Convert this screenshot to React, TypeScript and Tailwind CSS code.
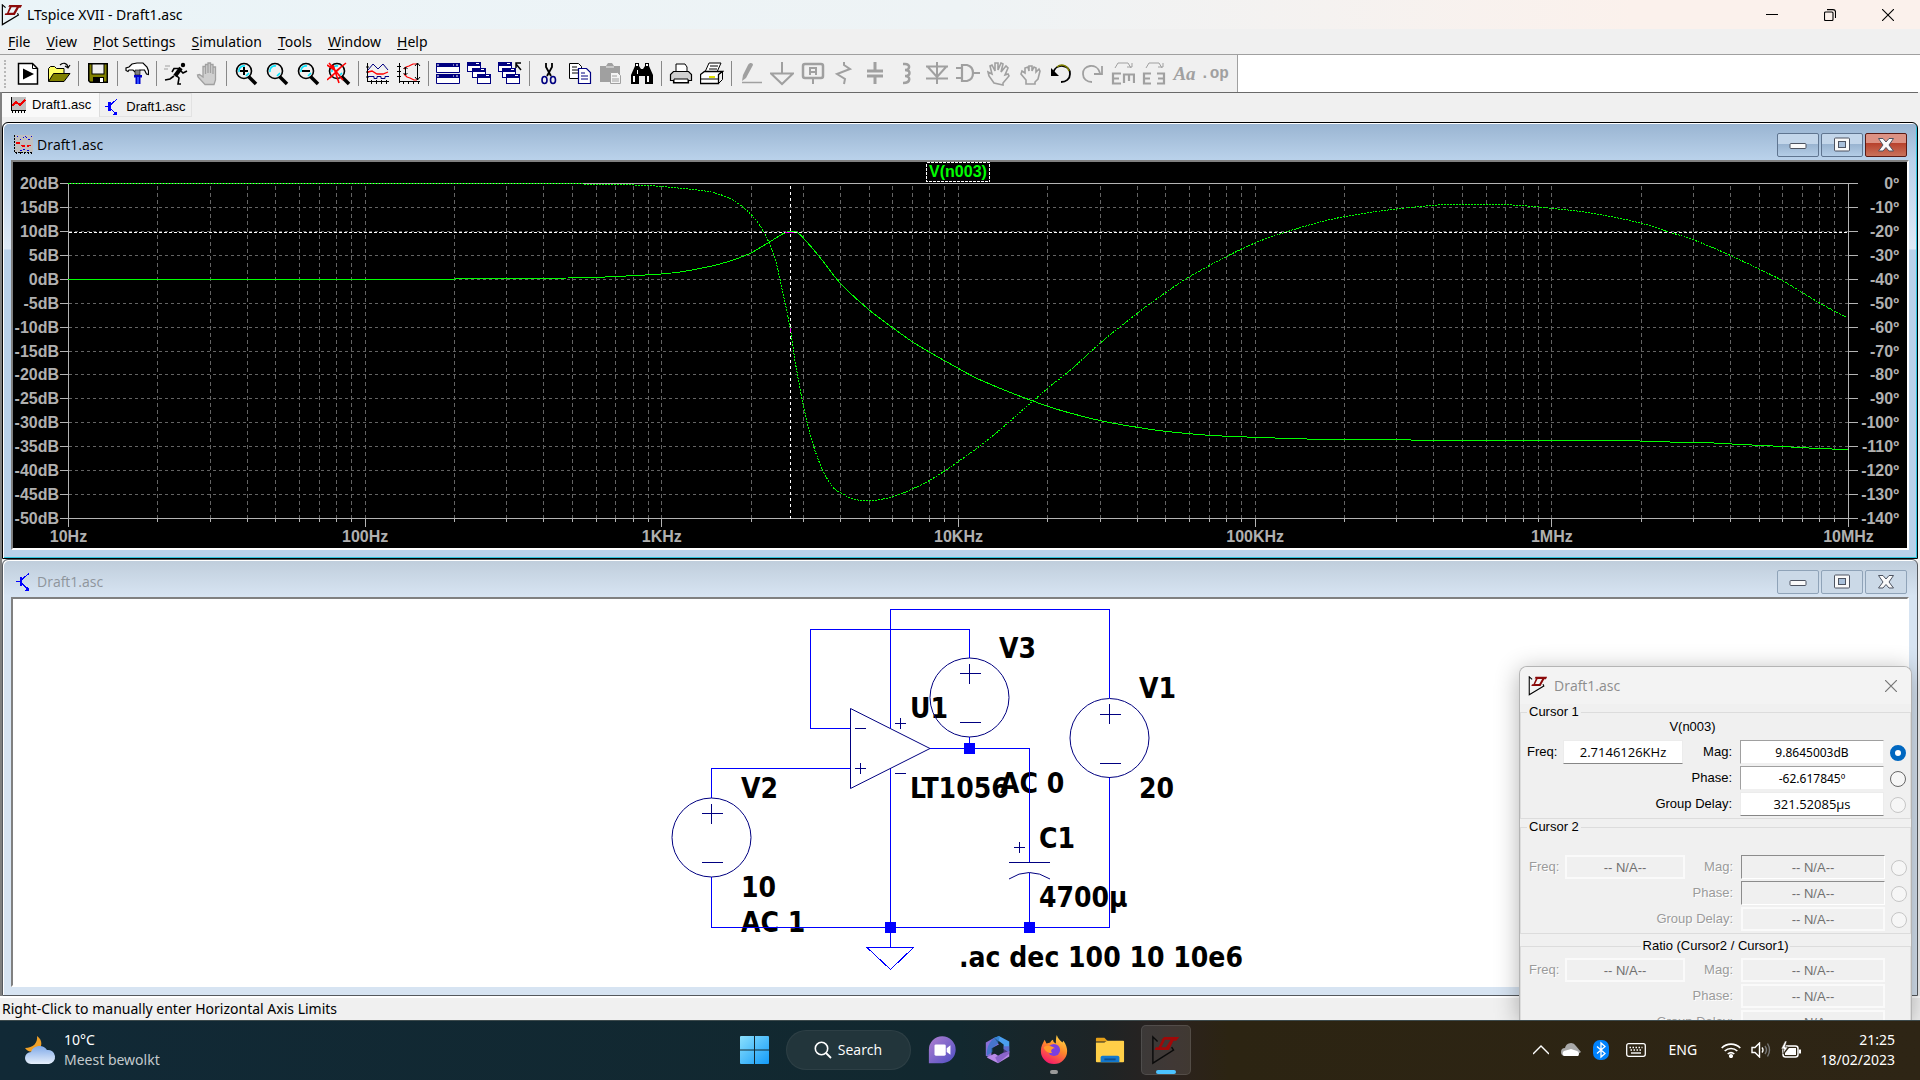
import React from "react";

type Pt = [number, number];

const UI = "font-['Noto_Sans','Open_Sans',sans-serif]";
const SANS = "font-['Liberation_Sans',Arial,sans-serif]";

/* ---------- Logo and small pictures ---------- */

function Logo({ className }: { className: string }) {
  return (
    <svg viewBox="0 0 24 24" className={className} aria-hidden="true">
      <path d="M5 4 1.5 1v21.500L19 12l-1-2" fill="none" stroke="#000" strokeWidth="1.300" />
      <path
        d="M9 1h14l-1.500 3h-2l-4.500 8H4l.8-2h1.700l3-7H8zM11.500 3.500l-3 6h5l3.500-6z"
        fill="#8b0a0a"
        fillRule="evenodd"
      />
    </svg>
  );
}

function PlotIcon({ className }: { className: string }) {
  return (
    <svg viewBox="0 0 20 20" className={className} aria-hidden="true" shapeRendering="crispEdges">
      <rect x="2" width="18" height="17" fill="#c0c0c0" />
      <path d="M1.500 0v17M2 17h18M3.500 17v3M7.500 17v3M11.500 17v3M15.500 17v3M18.500 17v3" stroke="#000" strokeDasharray="2 1" fill="none" />
      <path d="M4 1l4 4 4-4 4 4 3-4M7 16l3-2 4 2 3-2" stroke="#0000e0" strokeDasharray="2 2" fill="none" />
      <path d="M3 8h3l4 3h5l4-1" stroke="#e00" strokeWidth="1.500" strokeDasharray="4 2" fill="none" />
    </svg>
  );
}

function PlotTabIcon() {
  return (
    <svg viewBox="0 0 16 16" className="size-4" aria-hidden="true" shapeRendering="crispEdges">
      <rect x="2" width="14" height="13" fill="#c0c0c0" />
      <path d="M1 0v13.500h15M2.500 14v2M5.500 14v2M8.500 14v2M11.500 14v2M14.500 14v2" stroke="#000" fill="none" />
      <path d="M2 9l4-4 4 3 5-5" stroke="#f00000" strokeWidth="2" fill="none" />
    </svg>
  );
}

function TransistorIcon({ className }: { className: string }) {
  return (
    <svg viewBox="0 0 16 20" className={className} aria-hidden="true" shapeRendering="crispEdges">
      <path d="M0 9.500h6M7 7l8-7M7 12l7 7" stroke="#00f" fill="none" strokeWidth="1.400" />
      <path d="M4 4h3v11H4zM15 20h-5l4-5z" fill="#00f" />
    </svg>
  );
}

/* ---------- Toolbar ---------- */

const Lens = ({ children }: { children?: React.ReactNode }) => (
  <>
    <path d="M14 14l8 8" stroke="#000" strokeWidth="3.500" />
    <circle cx="10" cy="9" r="7.500" fill="#f0f0f0" stroke="#000" strokeWidth="1.600" />
    <path d="M5 10a5 5 0 0 1 6-6M12 14l3-3" stroke="#00e5ff" strokeWidth="1.600" />
    {children}
  </>
);

const Win = ({ x, y }: { x: number; y: number }) => (
  <>
    <rect x={x + 0.5} y={y + 0.5} width="13" height="9" fill="#fff" stroke="#000080" />
    <rect x={x} y={y} width="14" height="4" fill="#000080" />
    <rect x={x + 9} y={y + 1} width="3" height="1" fill="#fff" />
  </>
);

const G = "#a0a0a0";

type Tool = { name: string; art: React.ReactNode; sepAfter?: boolean };

const tools: Tool[] = [
  {
    name: "New",
    art: (
      <>
        <path d="M2.500 1.500h14l5 5v15.500h-19z" fill="#fff" stroke="#000" strokeWidth="1.500" />
        <path d="M16.500 1.500v5h5" stroke="#000" />
        <path d="M7 6.500v11l11-5.500z" fill="#000" />
      </>
    ),
  },
  {
    name: "Open",
    sepAfter: true,
    art: (
      <>
        <path d="M1.500 19V6.500l2-2h4l2 2h7.500V12" fill="#ffff66" stroke="#000" />
        <path d="M1.500 19.500l5-8h16.500l-6 8z" fill="#808000" stroke="#000" />
        <path d="M13 3c3-3 7-2 8 2m-3-1l3 2 2-3" stroke="#000" strokeWidth="1.200" />
      </>
    ),
  },
  {
    name: "Save",
    sepAfter: true,
    art: (
      <>
        <path d="M2 1h20v20H4l-2-2z" fill="#000" />
        <path d="M3.500 2.500h17v17h-16l-1-1z" fill="#808000" />
        <rect x="6" y="2" width="12" height="10" fill="#f0f0f0" stroke="#000" />
        <rect x="7" y="15" width="11" height="6" fill="#000" />
        <rect x="14" y="16" width="3" height="4" fill="#fff" />
      </>
    ),
  },
  {
    name: "Control Panel",
    sepAfter: true,
    art: (
      <>
        <path
          d="M1 8.500V6l3-1 3-3 5-1h6l4 4 1.500 4v3.500l-2-.5-2-4H15l-1 2h-4l-2-2H4l-1 1.500z"
          fill="#fff"
          stroke="#000"
          strokeWidth="1.200"
        />
        <path d="M10 8h5v5h-5z" fill="#808080" stroke="#000" strokeWidth=".6" />
        <path d="M9 13h8v2.500h-1.500V22h-5v-6.500H9z" fill="#0000c8" />
        <path d="M12 15h2v7h-2z" fill="#2a4dff" />
      </>
    ),
  },
  {
    name: "Run",
    art: (
      <>
        <circle cx="19" cy="3" r="2.200" fill="#000" />
        <path d="M1 4h5M0 7h4" stroke="#a0a0a0" />
        <path d="M17 6l-6 8" stroke="#000" strokeWidth="4" />
        <path d="M15 6.500H10L8 10M16 8l3 3 4-2M12 13l3 3-1 6h3M10 14l-4 3-5 1" stroke="#000" strokeWidth="1.600" />
      </>
    ),
  },
  {
    name: "Halt",
    sepAfter: true,
    art: (
      <path
        d="M10 22.500L3 15l-.5-2 2-.5L8 15V4.500h2.500V12 2.500H13V11 1h2.500v10V2.500H18V12 5h2.500v13L19 22.500z"
        fill="#cfcfcf"
        stroke={G}
        strokeWidth="1.300"
      />
    ),
  },
  { name: "Zoom in", art: <Lens><path d="M6 9h8M10 5v8" stroke="#000" strokeWidth="2" /></Lens> },
  { name: "Pan", art: <Lens /> },
  { name: "Zoom out", art: <Lens><path d="M6 9h8" stroke="#000" strokeWidth="2" /></Lens> },
  {
    name: "Zoom full extents",
    sepAfter: true,
    art: (
      <Lens>
        <path d="M0 3l9 6 10-8M2 1l14 17M0 18l8-7M3 16L15 4M6 3l4 12 2 6" stroke="#f00" strokeWidth="1.600" />
      </Lens>
    ),
  },
  {
    name: "Autorange",
    art: (
      <>
        <path d="M1.500 1v19M1 19.500h22M0 5h3M0 10h3M0 15h3M5.500 18v4M10.500 18v4M15.500 18v4M20.500 18v4" stroke="#000" />
        <path d="M2 8l5-6 5 5 5-5 5 6" stroke="#000080" />
        <path d="M2 10l4-1 5 3h6l5-2" stroke="#f00" strokeWidth="1.300" />
        <path d="M2 14.500h6v2h3v-2h4v2h4v-2h4" stroke="#000080" />
      </>
    ),
  },
  {
    name: "Manual limits",
    sepAfter: true,
    art: (
      <>
        <path d="M2.500 1v20M2 19.500h21M0 4.500h4M0 9.500h4M0 14.500h4M6.500 19v3M11.500 19v3M16.500 19v3M21.500 19v3" stroke="#000" />
        <path d="M7 7l2-2 3-1 4-2h4M7 12l3 3 3 1 4 2h3" stroke="#f00" strokeWidth="1.200" />
        <path d="M8.500 5v8M6.500 7l2-2 2 2M6.500 11l2 2 2-2M20.500 1v17M18 4l2.500-3L23 4M18 15l2.500 3 2.500-3" stroke="#000" />
      </>
    ),
  },
  {
    name: "Tile",
    art: (
      <>
        <path d="M.5 1.500h23v9H.500zM.5 12.500h23v9H.500z" fill="#fff" stroke="#000080" />
        <path d="M0 1h24v4H0zM0 12h24v4H0z" fill="#000080" />
        <path d="M1 3h2M17 3h1m2 0h2M1 14h2M17 14h1m2 0h2" stroke="#fff" />
      </>
    ),
  },
  { name: "Cascade", art: <><Win x={0} y={0} /><Win x={5} y={6} /><Win x={10} y={12} /></> },
  {
    name: "Close all",
    sepAfter: true,
    art: (
      <>
        <Win x={0} y={0} /><Win x={4} y={6} /><Win x={8} y={12} />
        <path d="M23 8l-5-6m0 4V1h5" stroke="#000" strokeWidth="1.500" />
      </>
    ),
  },
  {
    name: "Cut",
    art: (
      <>
        <path d="M9 1v4l5 9M15 1v4l-5 9" stroke="#000" strokeWidth="1.800" />
        <ellipse cx="7.500" cy="18" rx="2.500" ry="3.500" stroke="#000080" strokeWidth="1.600" />
        <ellipse cx="16" cy="18" rx="2.500" ry="3.500" stroke="#000080" strokeWidth="1.600" />
      </>
    ),
  },
  {
    name: "Copy",
    art: (
      <>
        <path d="M1.500 1.500h9l3 3v12h-12z" fill="#fff" stroke="#000" />
        <path d="M4 5h5M4 8h6M4 11h6" stroke="#000" />
        <path d="M10.500 6.500h8l4 4v11h-12z" fill="#fff" stroke="#000080" strokeWidth="1.200" />
        <path d="M13 11h4M13 14h7M13 17h7" stroke="#000080" />
      </>
    ),
  },
  {
    name: "Paste",
    art: (
      <>
        <path d="M1 4h6l2-3h4l2 3h6v16H1z" fill={G} />
        <path d="M7 5h8" stroke="#f0f0f0" />
        <path d="M11.500 10.500h7l3 3v8h-10z" fill="#f4f4f4" stroke={G} />
        <path d="M13 14h5M13 17h7M13 19h7" stroke={G} />
      </>
    ),
  },
  {
    name: "Find",
    sepAfter: true,
    art: (
      <>
        <path d="M5 1h4v3l2 3h2l2-3V1h4v3l4 9v9h-8v-8H9v8H1v-9l4-9z" fill="#000" />
        <path d="M6 2h2v2H6zM16 2h2v2h-2zM3 14h2v6H3zM17 14h2v6h-2zM7 8h1v4H7z" fill="#fff" />
      </>
    ),
  },
  {
    name: "Print setup",
    art: (
      <>
        <path d="M7 10V2h9l2 3v5" fill="#fff" stroke="#000" />
        <path d="M4.500 9.500h15l3 3v6h-3v2.500h-15v-2.500h-3v-6z" fill="#d0d0d0" stroke="#000" strokeWidth="1.200" />
        <path d="M5 17h14v3.500H5z" fill="#fff" stroke="#000" />
      </>
    ),
  },
  {
    name: "Print",
    sepAfter: true,
    art: (
      <>
        <path d="M5 10L9 1h12l-4 9" fill="#fff" stroke="#000" />
        <path d="M10 4h8M9 7h8" stroke="#000" />
        <path d="M.5 12.500l4-3h18l-4 3v9H.500z" fill="#fff" stroke="#000" strokeWidth="1.300" />
        <path d="M18.500 12.500l4-3v8l-4 4M1 17h17" stroke="#000" />
        <path d="M9 15h6" stroke="#e0e000" strokeWidth="2" />
      </>
    ),
  },
  {
    name: "Wire",
    art: (
      <>
        <path d="M9 3c2-3 5-2 5 0L7 16l-4 3 1-6z" fill={G} />
        <path d="M3 20.500h20" stroke={G} strokeWidth="1.500" />
      </>
    ),
  },
  { name: "Ground", art: <path d="M12 0v12M1 11.500h22L12 22z" stroke={G} strokeWidth="2" /> },
  {
    name: "Label net",
    art: (
      <>
        <rect x="2" y="2" width="20" height="14" rx="2" stroke={G} strokeWidth="2.500" />
        <path d="M12 16v6M9 13V6h6v7M9 10h6" stroke={G} strokeWidth="2" />
      </>
    ),
  },
  { name: "Resistor", art: <path d="M12 0v3l6 4-13 5 8 5-1 5" stroke={G} strokeWidth="2" /> },
  { name: "Capacitor", art: <path d="M12 0v8M12 15v7M4 9h16M4 14h16" stroke={G} strokeWidth="3" /> },
  { name: "Inductor", art: <path d="M9 2h2c6 0 5 6 0 6 6 0 6 6 0 6 6 0 6 7-2 7" stroke={G} strokeWidth="2.500" /> },
  { name: "Diode", art: <path d="M12 0v22M1 4.500h22M3 5l9 10 9-10M1 16.500h22" stroke={G} strokeWidth="2" /> },
  { name: "Component", art: <path d="M0 6h6M0 16h6M17 11h7M6 3v16h5c8-2 8-14 0-16z" stroke={G} strokeWidth="2.200" /> },
  {
    name: "Move",
    art: (
      <path
        d="M7 21l-5-7-1-4 4 2-2-8 2-1 3 6V1h3v7l3-7 2 1-2 8 5-6 2 2-3 7 3-1 1 2-6 7v2z"
        stroke={G}
        strokeWidth="1.600"
      />
    ),
  },
  {
    name: "Drag",
    art: (
      <path
        d="M8 22v-4l-5-6 1-3 3 2V6l3-1 1 4V4h3v5l2-4 2 1v4l3-3 1 2-2 8-3 3v2z"
        stroke={G}
        strokeWidth="1.600"
      />
    ),
  },
  {
    name: "Undo",
    art: (
      <>
        <path d="M4 11C7 0 22 3 21 12c0 5-4 8-9 8" stroke="#000" strokeWidth="1.800" />
        <path d="M8 5c5-4 11-1 12 4" stroke="#808000" strokeWidth="1.500" />
        <path d="M2 6v8h8z" fill="#000" />
      </>
    ),
  },
  {
    name: "Redo",
    art: <path d="M20 11C17 0 2 3 3 12c0 5 4 8 9 8M22 4v8h-8" stroke={G} strokeWidth="1.800" />,
  },
  {
    name: "Mirror",
    art: (
      <>
        <path d="M10 11.500H2v10h8M2 16.500h6M13 21v-8.500h10V21M18 13v6" stroke={G} strokeWidth="2.200" />
        <path d="M4 6l3-5h10l3 5m-4-1h5V1" stroke={G} />
      </>
    ),
  },
  {
    name: "Rotate",
    art: (
      <>
        <path d="M9 11.500H2v10h7M2 16.500h6M15 11.500h7v10h-7M22 16.500h-6" stroke={G} strokeWidth="2.200" />
        <path d="M4 6l3-5h10l3 5m-4-1h5V1" stroke={G} />
      </>
    ),
  },
];

function Toolbar() {
  return (
    <div className="flex h-[38px] border-t border-[#a0a0a0] bg-white">
      <div className="flex items-center border-r border-[#a0a0a0] bg-[#f0f0f0] pr-2 pl-1">
        <div className="mr-[6px] h-7 w-[2px] border-l-2 border-dotted border-[#b8b8b8]" />
        {tools.map((t) => (
          <React.Fragment key={t.name}>
            <button type="button" aria-label={t.name} className="flex h-8 w-[31px] shrink-0 items-center justify-center">
              <svg viewBox="0 0 24 24" className="h-6 w-6" fill="none">
                {t.art}
              </svg>
            </button>
            {t.sepAfter && (
              <div className="flex w-2 justify-center">
                <div className="h-[25px] w-px bg-[#888]" />
              </div>
            )}
          </React.Fragment>
        ))}
        <button type="button" className="h-8 w-[31px] font-['Liberation_Serif',serif] text-[19px] leading-8 font-bold text-[#a0a0a0] italic">
          Aa
        </button>
        <button type="button" className="h-8 w-[29px] font-['Liberation_Mono',monospace] text-[16px] leading-7 font-bold text-[#a0a0a0]">
          .op
        </button>
      </div>
    </div>
  );
}

/* ---------- Waveform plot ---------- */

const LEFT = 68.5;
const RIGHT = 1848.5;
const TOP = 183.5;
const BOTTOM = 518.5;
const DECADE = (RIGHT - LEFT) / 6;

const magnitude: Pt[] = [
  [68, 279.5], [455, 279], [568, 278], [605, 277], [645, 275], [661, 274], [680, 272], [700, 268.5], [720, 264],
  [739.5, 257.7], [751.4, 252.7], [769, 242.3], [785, 232.7], [791, 231.3], [797, 232.3], [803.6, 238.3],
  [818.6, 255.7], [840.4, 283.3], [869.2, 310], [892.6, 327.7], [912.3, 341.7], [929.7, 352.3], [958.2, 368.3],
  [976.8, 378.3], [1008.4, 391.7], [1032.9, 401], [1055.9, 409], [1100.6, 420.7], [1137.3, 427.3], [1165.4, 431.3],
  [1209.3, 435.3], [1255.6, 437.3], [1320, 439.3], [1410.8, 440], [1624.6, 440.7], [1680, 442.3], [1713.7, 443],
  [1737.5, 444.3], [1773, 446], [1808.7, 448], [1848, 449.7],
];

const phase: Pt[] = [
  [68, 183.5], [540, 183.5], [583, 184], [635, 185], [660, 186.4], [700, 190.3], [713.8, 192.7], [729.7, 198.3],
  [741.5, 206], [751.4, 215], [763.3, 231], [775, 259], [783, 293.3], [790.2, 328.3], [794.9, 360], [803.6, 406.7],
  [812.7, 443.3], [822.6, 470], [832.5, 486.7], [840.4, 492.7], [854.2, 499.3], [869.2, 500.3], [881.9, 499.3],
  [897.7, 495], [912.3, 489], [929.7, 480.3], [958.2, 461.7], [992.6, 436], [1032.9, 401], [1047.6, 388.3],
  [1071.7, 369], [1100.6, 342.7], [1137.3, 313.3], [1165.4, 292.7], [1189.5, 276.7], [1226.3, 256.7], [1255.6, 242.7],
  [1285.2, 232.3], [1320, 222], [1344.3, 216.7], [1375.2, 211.7], [1396.6, 209], [1433.4, 205.3], [1462.7, 204.3],
  [1494, 204.3], [1523.7, 205.7], [1551.8, 208.3], [1593, 213.3], [1641.7, 223.3], [1670, 232.3], [1693.9, 240],
  [1731, 255.7], [1759.6, 269.3], [1783, 281], [1820, 303.3], [1846.3, 317.3],
];

function smooth(points: Pt[]): string {
  let d = `M${points[0][0]} ${points[0][1]}`;
  for (let i = 0; i < points.length - 1; i++) {
    const p1 = points[i];
    const p2 = points[i + 1];
    const p0 = points[i - 1] ?? p1;
    const p3 = points[i + 2] ?? p2;
    const third = (p2[0] - p1[0]) / 3;
    const s1 = (p2[1] - p0[1]) / (p2[0] - p0[0] || 1);
    const s2 = (p3[1] - p1[1]) / (p3[0] - p1[0] || 1);
    d += `C${p1[0] + third} ${p1[1] + s1 * third} ${p2[0] - third} ${p2[1] - s2 * third} ${p2[0]} ${p2[1]}`;
  }
  return d;
}

const rows = Array.from({ length: 15 }, (_, i) => ({
  y: Math.round(TOP + ((BOTTOM - TOP) * i) / 14 - 0.5) + 0.5,
  db: `${20 - 5 * i}dB`,
  deg: i === 0 ? "0º" : `-${10 * i}º`,
}));

const freqs = ["10Hz", "100Hz", "1KHz", "10KHz", "100KHz", "1MHz", "10MHz"];

const minor = Array.from({ length: 6 }, (_, d) => d).flatMap((d) =>
  [1, 2, 3, 4, 5, 6, 7, 8, 9].map((m) => ({ m, x: Math.round(LEFT + DECADE * (d + Math.log10(m)) - 0.5) + 0.5 })),
);

function Plot() {
  return (
    <svg viewBox="13 162 1894 386" className="block h-auto w-full bg-black" role="img" aria-label="V(n003) frequency response">
      <g shapeRendering="crispEdges" fill="none">
        <g stroke="#646464" strokeDasharray="3 3">
          {rows.slice(1, 14).map((r) => (
            <line key={r.y} x1={LEFT} x2={RIGHT} y1={r.y} y2={r.y} />
          ))}
          {minor.slice(1).map((v) => (
            <line key={v.x} x1={v.x} x2={v.x} y1={TOP + 2} y2={BOTTOM} strokeDasharray="4 3" />
          ))}
        </g>
        <rect x={LEFT} y={TOP} width={RIGHT - LEFT} height={BOTTOM - TOP} stroke="#b4b4b4" />
        <g stroke="#b4b4b4">
          {rows.map((r) => (
            <path key={r.y} d={`M60 ${r.y}h8M1849 ${r.y}h9`} />
          ))}
          {minor.map((v) => (
            <line key={v.x} x1={v.x} x2={v.x} y1={BOTTOM} y2={BOTTOM + (v.m === 1 ? 8 : 3)} />
          ))}
          <line x1={RIGHT} x2={RIGHT} y1={BOTTOM} y2={BOTTOM + 8} />
        </g>
        <path d={smooth(phase)} stroke="#00ff00" strokeDasharray="2 1" />
        <path d={smooth(magnitude)} stroke="#00ff00" />
        <path d={`M${LEFT} 232.500H${RIGHT}`} stroke="#fff" strokeDasharray="3 2" />
        <path d={`M790.500 ${TOP + 2}V${BOTTOM}`} stroke="#fff" strokeDasharray="3 3" />
        <path d="M785 232.500h9M790.500 328v4" stroke="#ff00ff" />
        <rect x="926.500" y="162.500" width="63" height="19" stroke="#fff" strokeDasharray="3 1" />
      </g>
      <g className={`${SANS} text-[16px] font-bold`} fill="#b0b0b0">
        {rows.map((r) => (
          <React.Fragment key={r.y}>
            <text x="59" y={r.y + 5} textAnchor="end">{r.db}</text>
            <text x="1899" y={r.y + 5} textAnchor="end">{r.deg}</text>
          </React.Fragment>
        ))}
        {freqs.map((f, i) => (
          <text key={f} x={LEFT + DECADE * i} y="542" textAnchor="middle">{f}</text>
        ))}
        <text x="958" y="177" textAnchor="middle" fill="#00ff00">V(n003)</text>
      </g>
    </svg>
  );
}

/* ---------- Schematic ---------- */

function Source({ x, y }: { x: number; y: number }) {
  return (
    <>
      <circle cx={x} cy={y} r="39.500" />
      <path d={`M${x - 10} ${y - 24}h21M${x} ${y - 34}v20M${x - 10} ${y + 25}h21`} shapeRendering="crispEdges" />
    </>
  );
}

const labels: [number, number, string][] = [
  [999, 658, "V3"], [1139, 698, "V1"], [910, 718, "U1"], [741, 798, "V2"], [910, 798, "LT1056"], [1000, 793, "AC 0"],
  [1139, 798, "20"], [1039, 848, "C1"], [1039, 907, "4700µ"], [741, 897, "10"], [741, 932, "AC 1"],
  [959, 967, ".ac dec 100 10 10e6"],
];

function Schematic() {
  return (
    <svg viewBox="640 599 640 386" className="h-[386px] w-[640px]" role="img" aria-label="Schematic">
      <g fill="#000" className="font-['DejaVu_Sans_Condensed','DejaVu_Sans',sans-serif] text-[28px] font-bold">
        {labels.map(([x, y, t]) => (
          <text key={t} x={x} y={y}>{t}</text>
        ))}
      </g>
      <g fill="none" stroke="#0000ff" shapeRendering="crispEdges">
        <path d="M890.500 728V609.500h219V698M969.500 658v-28.500h-159V728.500H850M930 748.500h99.500V862M969.500 737v11" />
        <path d="M850 768.500H711.500V798M711.500 877v50.500h398V777M890.500 768v179M1029.500 873v54" />
        <path d="M867 947.500h46.500L890.500 969.500z" />
      </g>
      <g fill="none" stroke="#000080">
        <Source x={711.5} y={837.5} />
        <Source x={969.5} y={697.5} />
        <Source x={1109.5} y={738} />
        <path d="M850.500 708.500v80L930 748.500z" />
        <path d="M855 728.500h11M855 768.500h11M860.500 763v11M895 723.500h11M900.500 718v11M895 773.500h11" shapeRendering="crispEdges" />
        <path d="M1009 862.500h41M1014 847.500h11M1019.500 842v11" shapeRendering="crispEdges" />
        <path d="M1009 879q20-13 41 0" />
      </g>
      <path d="M964 743h11v11h-11zM885 922h11v11h-11zM1024 922h11v11h-11z" fill="#0000ff" />
    </svg>
  );
}

/* ---------- Child window frame ---------- */

function CaptionButtons({ active }: { active: boolean }) {
  const base = "flex h-6 w-[42px] items-center justify-center rounded-[2px] border";
  const plain = active
    ? "border-[#5f7590] bg-[linear-gradient(#c3d6ea_0_45%,#98b3d0_45%,#b4cde6)]"
    : "border-[#8fa3b8] bg-[#cbd9e7]";
  const close = active ? "border-[#5a1a14] bg-[linear-gradient(#dd9284_0_40%,#b8412c_42%,#c9735c)]" : plain;
  return (
    <div className="flex gap-[2px]">
      <button type="button" aria-label="Minimize" className={`${base} ${plain}`}>
        <svg viewBox="0 0 18 18" className="size-[18px]"><rect x="1" y="7.500" width="16" height="5" rx="1" fill="#fafafa" stroke="#4d5360" /></svg>
      </button>
      <button type="button" aria-label="Maximize" className={`${base} ${plain}`}>
        <svg viewBox="0 0 18 18" className="size-[18px]">
          <rect x="1.500" y="2" width="15" height="13" rx="1" fill="#fafafa" stroke="#4d5360" />
          <rect x="5.500" y="5.500" width="7" height="6" fill="#a9c0da" stroke="#4d5360" />
        </svg>
      </button>
      <button type="button" aria-label="Close" className={`${base} ${close}`}>
        <svg viewBox="0 0 18 18" className="size-[18px]">
          <path d="M1.500 2.500h4.500l3 3.500 3-3.500h4.500L12 9l4.500 6H12l-3-3.500L6 15H1.500L6 9z" fill="#fafafa" stroke="#4d5360" />
        </svg>
      </button>
    </div>
  );
}

function Child({ active, icon, children }: { active: boolean; icon: React.ReactNode; children: React.ReactNode }) {
  const frame = active
    ? "border-black bg-[linear-gradient(#99b4d1_0,#b9d1ea_36px,#dfeaf6_126px,#b9d1ea_127px)] shadow-[inset_1px_1px_0_#fff,inset_-1px_-1px_0_#2fc4dd]"
    : "border-[#55595e] bg-[linear-gradient(#bfcddb_0,#d7e4f2_36px)] shadow-[inset_1px_1px_0_#fff]";
  return (
    <section className={`rounded-t-[6px] border px-2 pb-2 ${frame}`}>
      <header className="flex h-[37px] items-center justify-between pt-[7px] pr-[2px] pl-[2px]">
        <div className="flex items-center gap-1">
          {icon}
          <h2 className={`font-['Open_Sans',sans-serif] text-[14px] leading-5 ${active ? "text-black" : "text-[#8e959c]"}`}>Draft1.asc</h2>
        </div>
        <CaptionButtons active={active} />
      </header>
      <div className="border-2 border-t-[#808080] border-r-white border-b-white border-l-[#808080] bg-white">{children}</div>
    </section>
  );
}

/* ---------- Cursor dialog ---------- */

type Row = { label: string; value: string; strong?: boolean };

function CursorGroup({
  id,
  title,
  caption,
  freq,
  values,
  enabled,
  radios,
  centered,
}: {
  id: string;
  title: string;
  caption?: string;
  freq: string;
  values: Row[];
  enabled?: boolean;
  radios?: boolean;
  centered?: boolean;
}) {
  const text = enabled ? "pl-[6px] pr-px text-black" : "pl-2 text-[#9b9b9b] [text-shadow:1px_1px_0_#fff]";
  const box = "h-6 w-full text-center";
  const flat = enabled
    ? "border border-[#ececec] border-b-[#868686] bg-white text-black font-['Open_Sans',sans-serif] text-[13px]"
    : "border-2 border-[#fafafa] bg-[#f0f0f0] text-[#707070]";
  const sunk = enabled
    ? "border border-[#a0a0a0] border-r-[#f0f0f0] border-b-[#f0f0f0] bg-white text-black font-['Noto_Sans',sans-serif] text-[12px]"
    : "border border-[#8c8c8c] border-r-white border-b-white bg-[#f0f0f0] text-[#707070]";
  return (
    <fieldset className="border border-[#dcdcdc]">
      <legend className={`px-[2px] leading-4 text-black ${centered ? "mx-auto" : "ml-[6px]"}`}>{title}</legend>
      {caption !== undefined ? (
        <div className="h-5 pr-[46px] text-center leading-[13px]">{caption}</div>
      ) : (
        <div className="h-1" />
      )}
      <div className={`grid grid-cols-[36px_120px_1fr_144px_25px] ${text}`}>
        {values.map((r, i) => (
          <React.Fragment key={r.label}>
            {i === 0 && (
              <>
                <label htmlFor={`${id}-freq`} className="leading-6">Freq:</label>
                <input id={`${id}-freq`} readOnly disabled={!enabled} defaultValue={freq} className={`${box} ${flat}`} />
              </>
            )}
            <label
              htmlFor={`${id}-${i}`}
              className={`h-[26px] pr-2 text-right leading-6 whitespace-nowrap ${i === 0 ? "" : "col-span-3"}`}
            >
              {r.label}
            </label>
            <input
              id={`${id}-${i}`}
              readOnly
              disabled={!enabled}
              defaultValue={r.value}
              className={`${box} ${r.strong ? sunk : flat}`}
            />
            <div className="flex h-[26px] items-center justify-end pr-[3px]">
              {radios && (
                <input
                  type="radio"
                  name={id}
                  aria-label={`${title} ${r.label}`}
                  defaultChecked={enabled && i === 0}
                  disabled={!enabled || i === 2}
                  className="size-4 appearance-none rounded-full border border-[#666] bg-[#f6f6f6] checked:border-[5px] checked:border-[#0067c0] checked:bg-white disabled:border-[#c6c6c6]"
                />
              )}
            </div>
          </React.Fragment>
        ))}
      </div>
    </fieldset>
  );
}

function CursorDialog() {
  const na = "-- N/A--";
  return (
    <div
      role="dialog"
      aria-label="Draft1.asc"
      className={`absolute right-2 bottom-0 h-[354px] w-[393px] overflow-hidden rounded-t-lg border border-b-0 border-[#b4b4b4] bg-[#f0f0f0] shadow-[0_4px_24px_rgba(0,0,0,0.3)] ${SANS} text-[13px] text-black`}
    >
      <div className="flex h-[37px] items-center justify-between bg-[#f3f3f3] pr-[14px] pl-2">
        <div className="flex items-center gap-[6px]">
          <Logo className="size-5" />
          <h2 className="font-['Open_Sans',sans-serif] text-[14px] text-[#8d8d8d]">Draft1.asc</h2>
        </div>
        <button type="button" aria-label="Close">
          <svg viewBox="0 0 12 12" className="size-3"><path d="M0 0l12 12M12 0L0 12" stroke="#777" strokeWidth="1.200" /></svg>
        </button>
      </div>
      <div className="flex flex-col">
        <CursorGroup
          id="c1"
          title="Cursor 1"
          caption="V(n003)"
          freq="2.7146126KHz"
          enabled
          radios
          values={[
            { label: "Mag:", value: "9.8645003dB", strong: true },
            { label: "Phase:", value: "-62.617845º", strong: true },
            { label: "Group Delay:", value: "321.52085µs" },
          ]}
        />
        <CursorGroup
          id="c2"
          title="Cursor 2"
          caption=""
          freq={na}
          radios
          values={[
            { label: "Mag:", value: na, strong: true },
            { label: "Phase:", value: na, strong: true },
            { label: "Group Delay:", value: na },
          ]}
        />
        <div className="pt-1">
          <CursorGroup
            id="ratio"
            title="Ratio (Cursor2 / Cursor1)"
            centered
            freq={na}
            values={[
              { label: "Mag:", value: na },
              { label: "Phase:", value: na },
              { label: "Group Delay:", value: na },
            ]}
          />
        </div>
      </div>
    </div>
  );
}

/* ---------- Taskbar ---------- */

function AppButton({ name, open, current, children }: { name: string; open?: boolean; current?: boolean; children: React.ReactNode }) {
  return (
    <button
      type="button"
      aria-label={name}
      className={`relative flex size-[50px] items-center justify-center rounded-[5px] ${current ? "border border-white/10 bg-white/10" : ""}`}
    >
      <svg viewBox="0 0 32 32" className="size-[30px]">{children}</svg>
      {open && <span className="absolute bottom-px h-1 w-2 rounded-full bg-[#9a9a9a]" />}
      {current && <span className="absolute bottom-0 h-1 w-5 rounded-full bg-[#4cc2ff]" />}
    </button>
  );
}

function Taskbar() {
  return (
    <footer
      className={`grid h-[60px] grid-cols-[1fr_auto_1fr] items-center border-t border-[#3d4a4c] bg-[linear-gradient(90deg,#112936_0%,#12282f_50%,#1d2426_57%,#2b221f_61%,#2c2412_64%,#2e2515_100%)] pb-[2px] ${UI} text-[14px] text-white`}
    >
      <div className="flex items-center gap-2 pl-6">
        <svg viewBox="0 0 32 32" className="size-8">
          <defs>
            <linearGradient id="cloud" x1="0" y1="0" x2="0" y2="1"><stop offset="0" stopColor="#7fa9e8" /><stop offset="1" stopColor="#e6effb" /></linearGradient>
          </defs>
          <path d="M13 2c6 4 6 12-1 15-5 2-9 0-11-3 8 0 13-5 12-12z" fill="#f0a128" />
          <path d="M7 30a6 6 0 0 1 0-12 9 9 0 0 1 16-2 7 7 0 0 1 2 14z" fill="url(#cloud)" />
        </svg>
        <div className="leading-5">
          <div>10°C</div>
          <div className="text-[#c3cacd]">Meest bewolkt</div>
        </div>
      </div>

      <div className="flex items-center gap-[6px]">
        <button type="button" aria-label="Start" className="flex size-[50px] items-center justify-center">
          <svg viewBox="0 0 30 30" className="size-[30px]">
            <defs>
              <linearGradient id="win" x1="0" y1="0" x2="1" y2="1"><stop offset="0" stopColor="#8be0fd" /><stop offset="1" stopColor="#139bf8" /></linearGradient>
            </defs>
            <path d="M0 2a1 1 0 0 1 1-1h13v13.500H0zM15 1h13a1 1 0 0 1 1 1v12.500H15zM0 15.500h14V29H1a1 1 0 0 1-1-1zM15 15.500h14V28a1 1 0 0 1-1 1H15z" fill="url(#win)" />
          </svg>
        </button>
        <button type="button" className="flex h-10 w-[125px] items-center justify-center gap-[6px] rounded-full border border-white/5 bg-[#22353b] font-['Open_Sans',sans-serif]">
          <svg viewBox="0 0 18 18" className="size-[18px]"><circle cx="7.500" cy="7.500" r="6.200" fill="none" stroke="#fff" strokeWidth="1.600" /><path d="M12 12l5 5" stroke="#fff" strokeWidth="1.800" /></svg>
          Search
        </button>
        <AppButton name="Chat">
          <defs>
            <linearGradient id="chat" x1="0" y1="0" x2="1" y2="1"><stop offset="0" stopColor="#b07fd0" /><stop offset="1" stopColor="#4f4fc4" /></linearGradient>
          </defs>
          <path d="M2 30V16A14.300 14.300 0 1 1 16 30z" fill="url(#chat)" />
          <rect x="8" y="10" width="12" height="12" rx="1.500" fill="#fff" />
          <path d="M21 14l4-3v10l-4-3z" fill="#fff" />
        </AppButton>
        <AppButton name="Microsoft 365">
          <path d="M12 3l5-2 11 6v12l-6-4V10z" fill="#4a9ff0" />
          <path d="M12 3L3 8v14l6 3V14l8-4z" fill="#8a6fd8" />
          <path d="M12 3l6-2-2 8-6 5v4l-6 4c0-8 2-14 8-19z" fill="#2b78c8" opacity=".7" />
          <path d="M28 17v6l-12 7-12-6 8-4 4 1z" fill="#b98ae8" />
          <path d="M28 12v8l-12 10-3-6 9-6v-6z" fill="#6c4bb5" opacity=".6" />
          <path d="M16 11l5 3v5l-5 3-4-3v-5z" fill="#14262c" />
        </AppButton>
        <AppButton name="Firefox" open>
          <defs>
            <linearGradient id="fox" x1=".8" y1="0" x2=".3" y2="1"><stop offset="0" stopColor="#ffe14a" /><stop offset=".45" stopColor="#ff8a2a" /><stop offset="1" stopColor="#f5156c" /></linearGradient>
          </defs>
          <path d="M19 0c1 4 3 5 6 8l1-2c3 4 4 8 4 11a14 14 0 0 1-28 0C2 12 4 9 6 5l2 4 4-1c1-2 2-3 3-3 0 2 1 3 3 4 0-3 0-6 1-9z" fill="url(#fox)" />
          <circle cx="16" cy="16" r="6.500" fill="#7a3fe0" />
          <path d="M5 13c4-3 9-1 12 1-4 0-5 3-3 5-4 1-8-2-9-6z" fill="#ff9a2c" />
        </AppButton>
        <AppButton name="File Explorer">
          <path d="M1 4a1 1 0 0 1 1-1h8l4 4H1z" fill="#e6a018" />
          <path d="M1 8h9l3-2h17a1 1 0 0 1 1 1v21a1 1 0 0 1-1 1H2a1 1 0 0 1-1-1z" fill="#ffcf48" />
          <path d="M6 29v-5a2 2 0 0 1 2-2h16a2 2 0 0 1 2 2v5z" fill="#1379cf" />
          <path d="M10 26h12" stroke="#0b4f90" strokeWidth="2" />
        </AppButton>
        <AppButton name="LTspice" current>
          <path d="M7 7L2 2v28l22-14-2-3" fill="none" stroke="#0a0a0a" strokeWidth="1.500" />
          <path d="M14 2h16l-3 4h-3l-5 10H4l1-3h3l4-8h-1zM15 5l-4 8h5l5-8z" fill="#a00808" fillRule="evenodd" />
        </AppButton>
      </div>

      <div className="flex items-center justify-end pr-[25px]">
        <svg viewBox="0 0 16 10" className="h-[10px] w-4"><path d="M0 9l8-8 8 8" fill="none" stroke="#fff" strokeWidth="1.400" /></svg>
        <svg viewBox="0 0 20 14" className="ml-3 h-[14px] w-5">
          <path d="M4 13a4 4 0 0 1 0-8 6 6 0 0 1 11-2l5 6-6 4z" fill="#a9a9a9" />
          <path d="M3 13a3 3 0 0 1 0-5l7-2 6 2a3 3 0 0 1 1 5z" fill="#fff" />
        </svg>
        <svg viewBox="0 0 16 20" className="ml-3 h-5 w-4">
          <rect width="16" height="20" rx="7" fill="#0082fc" />
          <path d="M4 6.500l8 7L8 17V3l4 3.500-8 7" fill="none" stroke="#fff" strokeWidth="1.300" />
        </svg>
        <svg viewBox="0 0 20 14" className="ml-[17px] h-[14px] w-5">
          <rect x=".7" y=".7" width="18.600" height="12.600" rx="2" fill="none" stroke="#fff" strokeWidth="1.300" />
          <path d="M3.500 4.500h13M4.500 7h11" stroke="#fff" strokeWidth="1.500" strokeDasharray="1.500 1.500" />
          <path d="M5 10h10" stroke="#fff" strokeWidth="1.400" />
        </svg>
        <span className="ml-[23px] w-[30px]">ENG</span>
        <svg viewBox="0 0 20 16" className="ml-[22px] h-4 w-5" fill="none" stroke="#fff" strokeWidth="1.600">
          <path d="M.7 6a13 13 0 0 1 18.600 0M3.700 9a9 9 0 0 1 12.600 0M6.700 12a5 5 0 0 1 6.600 0" />
          <circle cx="10" cy="14" r="1.300" fill="#fff" />
        </svg>
        <svg viewBox="0 0 20 16" className="ml-[10px] h-4 w-5" fill="none" stroke="#fff" strokeWidth="1.400">
          <path d="M1 5.500h3L8.500 1v14L4 10.500H1zM11 5.500q2 2.500 0 5" />
          <path d="M14 4q3 4 0 8M16.500 1.500q4 6.500 0 13" stroke="#777" />
        </svg>
        <svg viewBox="0 0 20 18" className="ml-[10px] h-[18px] w-5">
          <rect x="2" y="5" width="15" height="11" rx="2.500" fill="none" stroke="#fff" strokeWidth="1.500" />
          <path d="M8 7h7v7H4v-2zM18 8.500h2v4h-2z" fill="#fff" />
          <path d="M4 0L0 8h3l-1 5 5-7H4l2-6z" fill="#fff" stroke="#2e2515" strokeWidth=".6" />
        </svg>
        <time className="ml-[20px] text-right leading-5">
          <span className="block">21:25</span>
          <span className="block">18/02/2023</span>
        </time>
      </div>
    </footer>
  );
}

/* ---------- Page ---------- */

const menus = ["File", "View", "Plot Settings", "Simulation", "Tools", "Window", "Help"];

export default function App() {
  return (
    <div className="flex min-h-screen flex-col bg-[#f0f0f0] text-black">
      <div className="relative flex flex-1 flex-col overflow-hidden">
        <header className="flex h-[29px] items-center justify-between bg-[linear-gradient(90deg,#eaf4f8_0%,#eef3f5_50%,#fbf1ec_85%)] pr-[26px] pl-[1px]">
          <div className="flex items-center gap-1">
            <Logo className="size-[22px]" />
            <h1 className={`${UI} text-[14px]`}>LTspice XVII - Draft1.asc</h1>
          </div>
          <div className="flex items-center gap-[46px]">
            <button type="button" aria-label="Minimize"><svg viewBox="0 0 12 12" className="size-3"><path d="M0 5.500h12" stroke="#000" /></svg></button>
            <button type="button" aria-label="Restore">
              <svg viewBox="0 0 12 12" className="size-3" fill="none" stroke="#000" strokeWidth="1.100">
                <rect x=".5" y="3" width="8.500" height="8.500" rx="1" />
                <path d="M3 .6h6a2.500 2.500 0 0 1 2.500 2.500v6" />
              </svg>
            </button>
            <button type="button" aria-label="Close"><svg viewBox="0 0 12 12" className="size-3"><path d="M0 0l12 12M12 0L0 12" stroke="#000" strokeWidth="1.100" /></svg></button>
          </div>
        </header>

        <nav className={`flex h-[25px] items-center gap-4 pl-2 ${UI} text-[14px]`}>
          {menus.map((m) => (
            <button key={m} type="button" className="leading-5">
              <span className="underline underline-offset-2">{m[0]}</span>
              {m.slice(1)}
            </button>
          ))}
        </nav>

        <Toolbar />

        <div className="border-l-2 border-[#808080] pr-[2px]">
          <div role="tablist" className={`flex h-[30px] items-start border-t border-[#696969] ${SANS} text-[13px]`}>
            <button role="tab" aria-selected="true" type="button" className="flex h-6 items-center gap-[6px] border-r border-[#dcdcdc] bg-[#f9f9f9] px-2 leading-5">
              <PlotTabIcon />
              Draft1.asc
            </button>
            <button role="tab" aria-selected="false" type="button" className="flex h-6 items-center gap-2 border border-l-0 border-[#e2e2e2] px-[5px] pt-[3px] leading-5">
              <TransistorIcon className="h-4 w-[13px]" />
              Draft1.asc
            </button>
          </div>

          <Child active icon={<PlotIcon className="size-5" />}>
            <Plot />
          </Child>
          <Child active={false} icon={<TransistorIcon className="mx-[3px] h-[18px] w-[14px]" />}>
            <div className="flex justify-center"><Schematic /></div>
          </Child>
        </div>

        <div className={`flex flex-1 items-center border-t-2 border-white pl-[2px] ${UI} text-[14px] leading-5`}>
          Right-Click to manually enter Horizontal Axis Limits
        </div>

        <CursorDialog />
      </div>
      <Taskbar />
    </div>
  );
}
